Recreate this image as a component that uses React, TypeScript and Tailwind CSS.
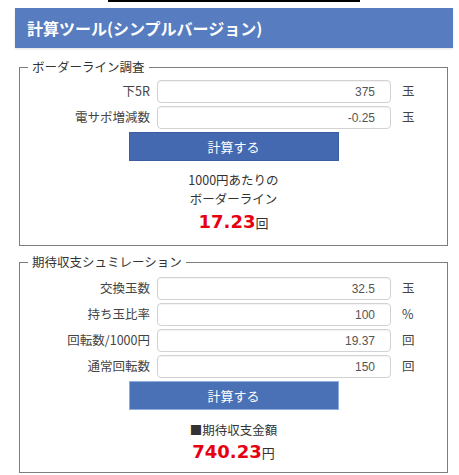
import React from 'react';

type Row = { label: string; value: string; unit: string };

const borderRows: Row[] = [
  { label: '下5R', value: '375', unit: '玉' },
  { label: '電サポ増減数', value: '-0.25', unit: '玉' },
];

const evRows: Row[] = [
  { label: '交換玉数', value: '32.5', unit: '玉' },
  { label: '持ち玉比率', value: '100', unit: '%' },
  { label: '回転数/1000円', value: '19.37', unit: '回' },
  { label: '通常回転数', value: '150', unit: '回' },
];

function Fields({ rows }: { rows: Row[] }) {
  return (
    <div className="grid grid-cols-[137px_234px_auto] gap-y-[3px] gap-x-0">
      {rows.map((r) => (
        <React.Fragment key={r.label}>
          <div className="h-[23px] flex items-center justify-end pr-[7px] text-[12.5px] text-[#444]">{r.label}</div>
          <input
            defaultValue={r.value}
            className="h-[23px] w-[234px] border border-[#d2d2d2] rounded-[4px] bg-white text-right pr-[15px] text-[12px] text-[#555] font-['Liberation_Sans',sans-serif] shadow-[inset_0_1px_1px_rgba(0,0,0,0.05)] outline-none"
          />
          <div className="h-[23px] flex items-center pl-[11px] text-[12.5px] text-[#444]">{r.unit}</div>
        </React.Fragment>
      ))}
    </div>
  );
}

function CalcButton({ focused }: { focused?: boolean }) {
  return (
    <button
      className={
        'block mx-auto w-[210px] h-[29px] text-white text-[13px] ' +
        (focused ? 'bg-[#4a70b6] border border-[#8fb0e0]' : 'bg-[#4469b0] border border-[#3b5e9f]')
      }
    >
      計算する
    </button>
  );
}

export default function App() {
  return (
    <div className="w-[459px] h-[475px] bg-white overflow-hidden text-[#333] font-['Noto_Sans_CJK_JP',sans-serif]">
      <div className="ml-[108px] w-[252px] h-[2px] bg-black" />
      <div className="pl-[15px] pr-[6px] pt-[6px]">
        <div className="h-[40px] bg-[#577cc0] flex items-center pl-[12px] text-white font-bold text-[16px] shadow-[0_1px_2px_rgba(0,0,0,0.12)]">
          計算ツール(シンプルバージョン)
        </div>

        <div className="pl-[4px] pr-[5px]">
          <fieldset className="mt-[10px] border border-[#7d7d7d] pb-[9px]">
            <legend className="ml-[8px] px-[4px] text-[12.5px] leading-[18px] text-[#333]">ボーダーライン調査</legend>
            <div className="mt-[4px]">
              <Fields rows={borderRows} />
            </div>
            <div className="mt-[3px]">
              <CalcButton />
            </div>
            <div className="mt-[9px] text-center text-[12.5px] leading-[19px] text-[#333]">
              <div>1000円あたりの</div>
              <div>ボーダーライン</div>
              <div className="leading-[27px]">
                <span className="text-[#e60012] font-bold text-[18px] font-['DejaVu_Sans',sans-serif]">17.23</span>
                <span className="text-[13px]">回</span>
              </div>
            </div>
          </fieldset>

          <fieldset className="mt-[7px] border border-[#7d7d7d] pb-[6px]">
            <legend className="ml-[8px] px-[4px] text-[12.5px] leading-[18px] text-[#333]">期待収支シュミレーション</legend>
            <div className="mt-[6px]">
              <Fields rows={evRows} />
            </div>
            <div className="mt-[3px]">
              <CalcButton focused />
            </div>
            <div className="mt-[10px] text-center text-[12.5px] leading-[19px] text-[#333]">
              <div>■期待収支金額</div>
              <div className="leading-[26px]">
                <span className="text-[#e60012] font-bold text-[18px] font-['DejaVu_Sans',sans-serif]">740.23</span>
                <span className="text-[13px]">円</span>
              </div>
            </div>
          </fieldset>
        </div>
      </div>
    </div>
  );
}
